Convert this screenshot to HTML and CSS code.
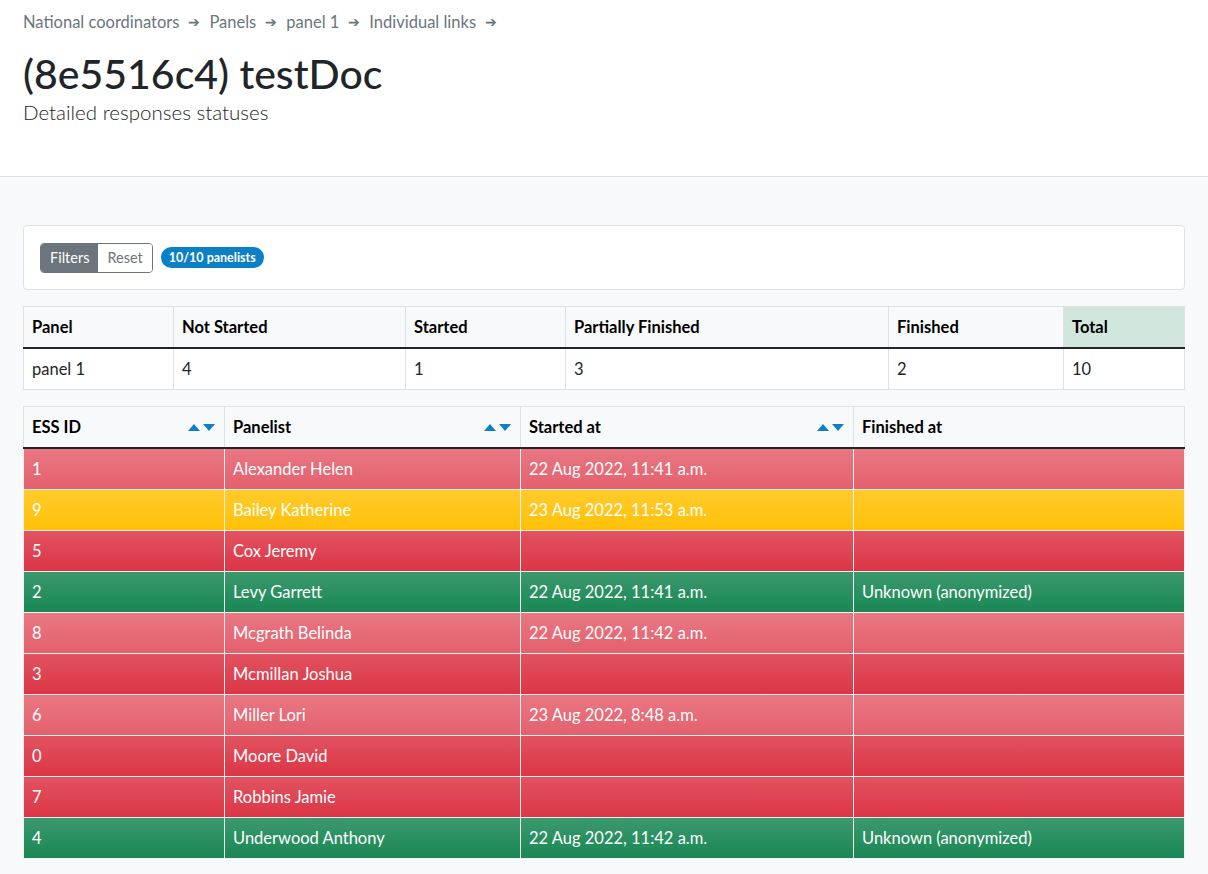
FILE: index.html
```html
<!DOCTYPE html>
<html>
<head>
<meta charset="utf-8">
<link rel="stylesheet" href="styles.css">
</head>
<body>
<header class="page-header">
  <nav class="crumbs">
    <span>National coordinators</span><span class="arr">➔</span>
    <span>Panels</span><span class="arr">➔</span>
    <span>panel 1</span><span class="arr">➔</span>
    <span>Individual links</span><span class="arr">➔</span>
  </nav>
  <h1 class="title">(8e5516c4) testDoc</h1>
  <p class="subtitle">Detailed responses statuses</p>
</header>
<main class="content">
  <section class="filter-card">
    <div class="btn-group">
      <span class="btn btn-active">Filters</span><span class="btn">Reset</span>
    </div>
    <span class="badge">10/10 panelists</span>
  </section>

  <table class="tbl summary">
    <colgroup>
      <col style="width:150px"><col style="width:232px"><col style="width:160px"><col style="width:323px"><col style="width:175px"><col>
    </colgroup>
    <thead>
      <tr><th>Panel</th><th>Not Started</th><th>Started</th><th>Partially Finished</th><th>Finished</th><th class="total">Total</th></tr>
    </thead>
    <tbody>
      <tr><td>panel 1</td><td>4</td><td>1</td><td>3</td><td>2</td><td>10</td></tr>
    </tbody>
  </table>

  <table class="tbl details">
    <colgroup>
      <col style="width:201px"><col style="width:296px"><col style="width:333px"><col>
    </colgroup>
    <thead>
      <tr>
        <th><div class="sortable">ESS ID<span class="sort"><i class="up"></i><i class="down"></i></span></div></th>
        <th><div class="sortable">Panelist<span class="sort"><i class="up"></i><i class="down"></i></span></div></th>
        <th><div class="sortable">Started at<span class="sort"><i class="up"></i><i class="down"></i></span></div></th>
        <th>Finished at</th>
      </tr>
    </thead>
    <tbody>
      <tr class="r-started"><td>1</td><td>Alexander Helen</td><td>22 Aug 2022, 11:41 a.m.</td><td></td></tr>
      <tr class="r-partial"><td>9</td><td>Bailey Katherine</td><td>23 Aug 2022, 11:53 a.m.</td><td></td></tr>
      <tr class="r-none"><td>5</td><td>Cox Jeremy</td><td></td><td></td></tr>
      <tr class="r-done"><td>2</td><td>Levy Garrett</td><td>22 Aug 2022, 11:41 a.m.</td><td>Unknown (anonymized)</td></tr>
      <tr class="r-started"><td>8</td><td>Mcgrath Belinda</td><td>22 Aug 2022, 11:42 a.m.</td><td></td></tr>
      <tr class="r-none"><td>3</td><td>Mcmillan Joshua</td><td></td><td></td></tr>
      <tr class="r-started"><td>6</td><td>Miller Lori</td><td>23 Aug 2022, 8:48 a.m.</td><td></td></tr>
      <tr class="r-none"><td>0</td><td>Moore David</td><td></td><td></td></tr>
      <tr class="r-none"><td>7</td><td>Robbins Jamie</td><td></td><td></td></tr>
      <tr class="r-done"><td>4</td><td>Underwood Anthony</td><td>22 Aug 2022, 11:42 a.m.</td><td>Unknown (anonymized)</td></tr>
    </tbody>
  </table>
</main>
</body>
</html>
```

FILE: styles.css
```css
html, body {
  margin: 0;
  padding: 0;
}
body {
  font-family: Lato, "Open Sans", sans-serif;
  font-size: 16.5px;
  color: #212529;
  background: #f8f9fa;
}
.page-header {
  background: #fff;
  border-bottom: 1px solid #dee2e6;
  padding: 12px 23px 0;
  height: 177px;
  box-sizing: border-box;
}
.crumbs {
  color: #6c757d;
  font-size: 16.5px;
  line-height: 20px;
  display: flex;
  gap: 8px;
}
.crumbs .arr {
  font-size: 14px;
  margin: 0 1px;
}
.title {
  margin: 20px 0 0;
  font-size: 41px;
  font-weight: 500;
  line-height: 44px;
}
.subtitle {
  margin: 4px 0 0;
  font-size: 20.5px;
  font-weight: 300;
  line-height: 24px;
}
.content {
  padding: 48px 23px 16px;
}
.filter-card {
  background: #fff;
  border: 1px solid #dee2e6;
  border-radius: 4px;
  height: 65px;
  box-sizing: border-box;
  display: flex;
  align-items: center;
  padding: 0 16px;
  gap: 8px;
  margin-bottom: 16px;
}
.btn-group {
  display: flex;
  border: 1px solid #6c757d;
  border-radius: 4px;
  overflow: hidden;
  height: 30px;
  box-sizing: border-box;
}
.btn {
  font-size: 14.5px;
  padding: 0 9px;
  line-height: 28px;
  color: #6c757d;
  background: #fff;
}
.btn-active {
  background: #6c757d;
  color: #fff;
}
.badge {
  background: #0c80c6;
  color: #fff;
  font-size: 12.5px;
  font-weight: 700;
  border-radius: 11px;
  padding: 0 8px;
  line-height: 21px;
}
.tbl {
  width: 100%;
  border-collapse: collapse;
  table-layout: fixed;
  margin-bottom: 16px;
}
.tbl th, .tbl td {
  border: 1px solid #dee2e6;
  padding: 0 8px;
  height: 40px;
  text-align: left;
  vertical-align: middle;
  line-height: 20px;
}
.tbl th {
  background: #f8f9fa;
  font-weight: 700;
  color: #000;
  border-bottom: 2px solid #212529;
  height: 40px;
}
.tbl td {
  background: #fff;
}
.summary th.total {
  background: #d1e7dd;
}
.sortable {
  display: flex;
  justify-content: space-between;
  align-items: center;
}
.sort {
  display: flex;
  gap: 3px;
  margin-right: 1px;
}
.sort i {
  width: 0;
  height: 0;
  border-left: 6px solid transparent;
  border-right: 6px solid transparent;
}
.sort .up {
  border-bottom: 7px solid #0c80c6;
}
.sort .down {
  border-top: 7px solid #0c80c6;
}
.details tbody td {
  color: #fff;
  border-color: #eef0f2;
  background-color: transparent;
}
.details tbody tr {
  background-image: linear-gradient(180deg, rgba(255,255,255,0.15), rgba(255,255,255,0));
}
.details tr.r-none { background-color: #dc3545; }
.details tr.r-started { background-color: #e4606d; }
.details tr.r-partial { background-color: #ffc107; }
.details tr.r-done { background-color: #198754; }
```
